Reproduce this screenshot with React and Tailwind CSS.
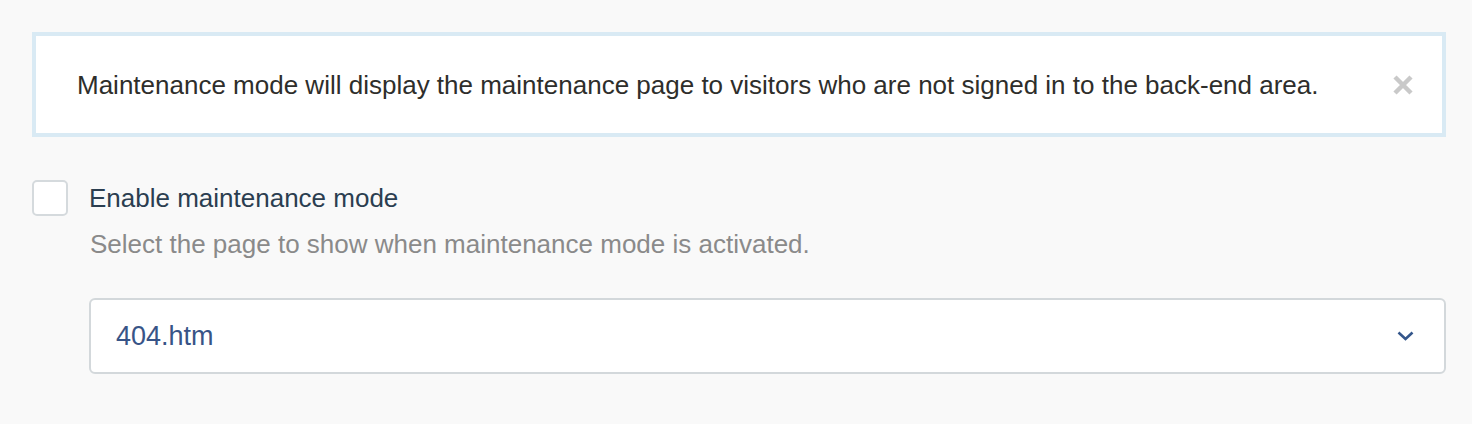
import React from "react";

const CloseIcon = () => (
  <svg width="22" height="22" viewBox="0 0 22 22" className="block">
    <path d="M3 3 L19 19 M19 3 L3 19" stroke="#c9c9c9" strokeWidth="4.5" strokeLinecap="butt" />
  </svg>
);

const Chevron = () => (
  <svg width="17" height="10" viewBox="0 0 17 10" className="block">
    <path d="M1.5 1.5 L8.5 8 L15.5 1.5" stroke="#34568b" strokeWidth="2.6" fill="none" />
  </svg>
);

export default function App() {
  return (
    <div
      className="w-[1472px] h-[424px] bg-[#f9f9f9] pt-8 pl-8 pr-[26px]"
      style={{ fontFamily: '"Liberation Sans", Arial, sans-serif' }}
    >
      {/* Callout */}
      <div className="h-[105px] border-4 border-[#d9eaf4] bg-white flex items-center justify-between pl-[41px] pr-[28px]">
        <p className="text-[26px] text-[#2e2e2b] leading-none">
          Maintenance mode will display the maintenance page to visitors who are not signed in to the back-end area.
        </p>
        <CloseIcon />
      </div>

      {/* Checkbox */}
      <div className="mt-[43px] flex items-center gap-[21px]">
        <div className="w-9 h-9 rounded-[5px] border-2 border-[#d5dadd] bg-white" />
        <span className="text-[26px] leading-none text-[#2b3e50]">Enable maintenance mode</span>
      </div>
      <p className="ml-[58px] mt-[15px] text-[26px] leading-none text-[#8a8a8a]">
        Select the page to show when maintenance mode is activated.
      </p>

      {/* Select */}
      <div className="ml-[57px] mt-[41px] h-[76px] rounded-[6px] border-2 border-[#d3d8db] bg-white flex items-center justify-between pl-[25px] pr-[30px]">
        <span className="text-[27px] leading-none text-[#385487]">404.htm</span>
        <Chevron />
      </div>
    </div>
  );
}
